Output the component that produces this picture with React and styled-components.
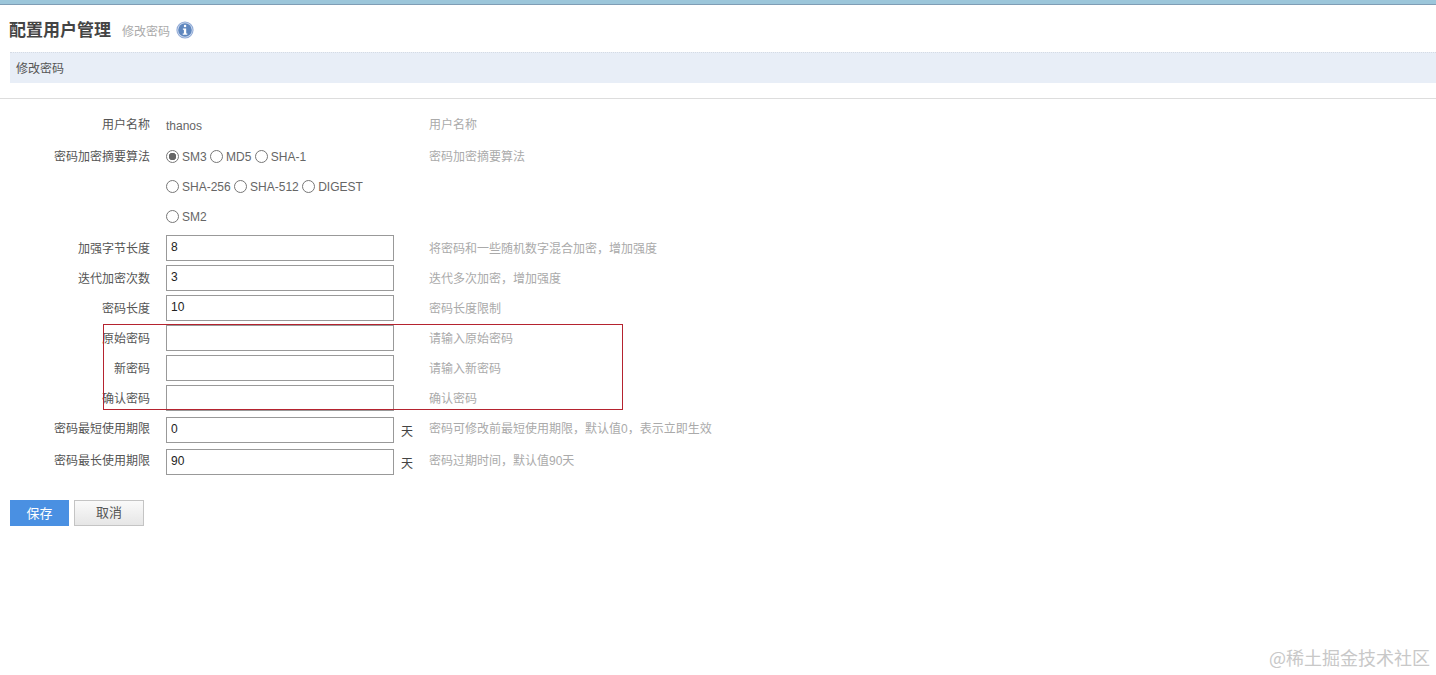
import React from 'react';
import styled, { createGlobalStyle } from 'styled-components';

const GlobalStyle = createGlobalStyle`
  html, body {
    margin: 0;
    padding: 0;
    background: #fff;
  }
  body {
    font-family: "Liberation Sans", "Noto Sans CJK SC", sans-serif;
    font-size: 12px;
    color: #555;
  }
`

const Page = styled.div`
  position: relative;
  height: 675px;
  overflow: hidden;
`
const TopBar = styled.div`
  height: 4px;
  background: #9cc6da;
  border-bottom: 1px solid #7f9db5;
`
const TitleRow = styled.div`
  height: 47px;
  padding-left: 9px;
  display: flex;
  align-items: center;
  gap: 11px;
`
const Title = styled.h1`
  margin: 0;
  font-size: 17px;
  font-weight: bold;
  color: #444;
  font-family: "Noto Sans CJK SC", sans-serif;
`
const SubTitle = styled.span`
  color: #aaa;
  font-size: 12px;
  margin-top: 4px;
`
const InfoIcon = styled.svg`
  width: 18px;
  height: 18px;
  margin-left: -5px;
  margin-top: 2px;
`
const PanelBar = styled.div`
  box-sizing: border-box;
  height: 31px;
  margin-left: 10px;
  padding: 0 0 2px 6px;
  display: flex;
  align-items: center;
  background: #e8eef7;
  border-top: 1px dotted #d5dbe4;
  color: #555;
  font-size: 12px;
`
const Divider = styled.hr`
  margin: 15px 0 0;
  border: 0;
  border-top: 1px solid #ddd;
`
const Form = styled.form`
  padding-top: 10px;
`
const Row = styled.div`
  display: flex;
  align-items: ${(p) => (p.$top ? 'flex-start' : 'center')};
  height: ${(p) => p.$height || 30}px;
  margin-top: ${(p) => p.$gap || 0}px;
`
const Label = styled.label`
  width: 150px;
  flex: none;
  text-align: right;
  color: #555;
  padding-top: ${(p) => p.$offset || 0}px;
  padding-bottom: ${(p) => p.$lift || 0}px;
`
const Field = styled.div`
  width: 228px;
  margin-left: 16px;
  flex: none;
  padding-top: ${(p) => p.$offset || 0}px;
`
const PlainValue = styled.span`
  display: block;
  color: #666;
  padding-top: 2px;
`
const TextInput = styled.input`
  display: block;
  box-sizing: border-box;
  width: 228px;
  height: 26px;
  padding: 0 4px 2px;
  border: 1px solid #999;
  background: #fff;
  font: 12px "Liberation Sans", sans-serif;
  color: #222;
  outline: none;
`
const Unit = styled.span`
  width: 35px;
  flex: none;
  padding-left: 7px;
  box-sizing: border-box;
  color: #444;
`
const Hint = styled.span`
  margin-left: ${(p) => (p.$afterUnit ? 0 : 35)}px;
  padding-top: ${(p) => p.$offset || 0}px;
  padding-bottom: ${(p) => p.$lift || 0}px;
  color: #aaa;
`
const RadioLine = styled.div`
  height: 30px;
  display: flex;
  align-items: center;
`
const RadioItem = styled.label`
  display: flex;
  align-items: center;
  gap: 3px;
  margin-right: 3.4px;
  color: #666;
`
const Radio = styled.input`
  appearance: none;
  box-sizing: border-box;
  width: 13px;
  height: 13px;
  margin: -2px 0 0;
  border: 1px solid #777;
  border-radius: 50%;
  background: #fff;
  &:checked {
    background: radial-gradient(circle, #666 0 3.5px, #fff 4px);
  }
`
const Actions = styled.div`
  display: flex;
  gap: 5px;
  margin: 23px 0 0 10px;
`
const SaveButton = styled.button`
  width: 59px;
  height: 26px;
  border: 0;
  padding: 0 0 1px;
  background: #4a90e2;
  color: #fff;
  font: 13px "Liberation Sans", "Noto Sans CJK SC", sans-serif;
`
const CancelButton = styled.button`
  box-sizing: border-box;
  width: 70px;
  height: 26px;
  border: 1px solid #c4c4c4;
  padding: 0 0 3px;
  background: linear-gradient(#fafafa, #e6e6e6);
  color: #555;
  font: 13px "Liberation Sans", "Noto Sans CJK SC", sans-serif;
`
const Highlight = styled.div`
  position: absolute;
  left: 103px;
  top: 324px;
  width: 520px;
  height: 86px;
  box-sizing: border-box;
  border: 1px solid #b5232f;
  pointer-events: none;
`
const Watermark = styled.div`
  position: absolute;
  right: 6px;
  bottom: 6px;
  font-size: 18px;
  line-height: 24px;
  color: #c8c8c8;
  font-family: "Noto Sans CJK SC", sans-serif;
`

const radioLines = [
  ['SM3', 'MD5', 'SHA-1'],
  ['SHA-256', 'SHA-512', 'DIGEST'],
  ['SM2'],
]

const inputRows = [
  { label: '加强字节长度', value: '8', hint: '将密码和一些随机数字混合加密\uFF0C增加强度' },
  { label: '迭代加密次数', value: '3', hint: '迭代多次加密\uFF0C增加强度' },
  { label: '密码长度', value: '10', hint: '密码长度限制' },
  { label: '原始密码', value: '', hint: '请输入原始密码' },
  { label: '新密码', value: '', hint: '请输入新密码' },
  { label: '确认密码', value: '', hint: '确认密码' },
  { label: '密码最短使用期限', value: '0', hint: '密码可修改前最短使用期限\uFF0C默认值0\uFF0C表示立即生效', unit: '天', gap: 2 },
  { label: '密码最长使用期限', value: '90', hint: '密码过期时间\uFF0C默认值90天', unit: '天', gap: 2 },
]

const App = () => {
  return (
    <Page>
      <GlobalStyle />
      <TopBar />
      <TitleRow>
        <Title>配置用户管理</Title>
        <SubTitle>修改密码</SubTitle>
        <InfoIcon viewBox="0 0 18 18">
          <circle cx="9" cy="9" r="8.6" fill="#8fa9d6" />
          <circle cx="9" cy="9" r="7.6" fill="#d5e0f1" />
          <circle cx="9" cy="9" r="6.8" fill="#5f87bf" />
          <rect x="7.8" y="3.8" width="2.5" height="2.5" rx="1.2" fill="#fff" />
          <path d="M6.9 7.4h3.3v5h1.1v1.3H6.7v-1.3h1.2V8.7h-1z" fill="#fff" />
        </InfoIcon>
      </TitleRow>
      <PanelBar>修改密码</PanelBar>
      <Divider />
      <Form>
        <Row $height={32}>
          <Label $lift={4}>用户名称</Label>
          <Field><PlainValue>thanos</PlainValue></Field>
          <Hint $lift={4}>用户名称</Hint>
        </Row>
        <Row $height={92} $top>
          <Label $offset={6}>密码加密摘要算法</Label>
          <Field $offset={1}>
            {radioLines.map((line) => (
              <RadioLine key={line[0]}>
                {line.map((name) => (
                  <RadioItem key={name}>
                    <Radio type="radio" name="algorithm" defaultChecked={name === 'SM3'} />
                    {name}
                  </RadioItem>
                ))}
              </RadioLine>
            ))}
          </Field>
          <Hint $offset={6}>密码加密摘要算法</Hint>
        </Row>
        {inputRows.map((row) => (
          <Row key={row.label} $gap={row.gap}>
            <Label $lift={row.unit ? 6 : 2}>{row.label}</Label>
            <Field><TextInput type="text" defaultValue={row.value} /></Field>
            {row.unit && <Unit>{row.unit}</Unit>}
            <Hint $afterUnit={!!row.unit} $lift={row.unit ? 6 : 2}>{row.hint}</Hint>
          </Row>
        ))}
        <Actions>
          <SaveButton type="button">保存</SaveButton>
          <CancelButton type="button">取消</CancelButton>
        </Actions>
      </Form>
      <Highlight />
      <Watermark>@稀土掘金技术社区</Watermark>
    </Page>
  )
}

export default App;
